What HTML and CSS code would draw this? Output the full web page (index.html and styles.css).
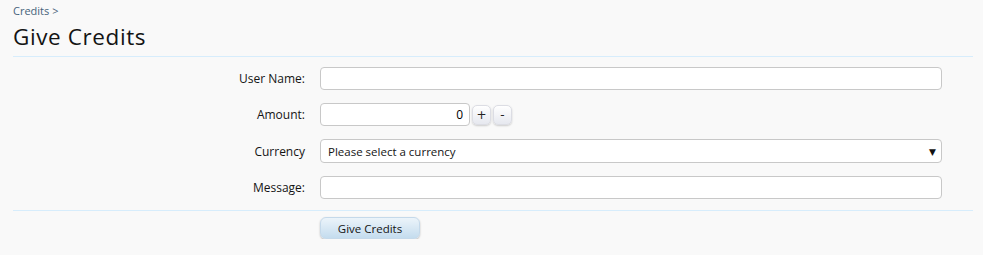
FILE: index.html
```html
<!DOCTYPE html>
<html>
<head>
<meta charset="utf-8">
<link rel="stylesheet" href="styles.css">
</head>
<body>
<div class="page">
  <div class="crumbs"><a href="#">Credits</a> &gt;</div>
  <h1 class="title">Give Credits</h1>
  <form class="form">
    <div class="row">
      <label class="label">User Name:</label>
      <div class="ctrl"><input class="text" type="text"></div>
    </div>
    <div class="row">
      <label class="label">Amount:</label>
      <div class="ctrl spin">
        <input class="text num" type="text" value="0">
        <button type="button" class="spinbtn">+</button>
        <button type="button" class="spinbtn">-</button>
      </div>
    </div>
    <div class="row">
      <label class="label">Currency</label>
      <div class="ctrl">
        <div class="select"><span>Please select a currency</span><span class="arrow">&#9660;</span></div>
      </div>
    </div>
    <div class="row last">
      <label class="label">Message:</label>
      <div class="ctrl"><input class="text" type="text"></div>
    </div>
    <div class="submit">
      <div class="spacer"></div>
      <div class="ctrl"><button type="button" class="button">Give Credits</button></div>
    </div>
  </form>
</div>
</body>
</html>
```
FILE: styles.css
```css
html, body { margin: 0; padding: 0; background: #f9f9f9; }
body { font-family: "Open Sans", "DejaVu Sans", sans-serif; font-size: 12px; color: #141414; }
.page { padding: 3px 10px 0 13px; }
.crumbs { font-size: 11px; color: #47637b; line-height: 16px; }
.crumbs a { color: #47637b; text-decoration: none; }
.title { font-size: 22.5px; letter-spacing: 0.6px; font-weight: normal; margin: 3px 0 0; line-height: 29px; color: #141414; padding-bottom: 5px; border-bottom: 1px solid #d7edfc; }
.form { padding-top: 10px; }
.row { display: flex; align-items: center; margin-bottom: 13px; }
.row.last { margin-bottom: 12px; }
.label { width: 292px; text-align: right; padding-right: 15px; color: #141414; }
.ctrl { flex: 0 0 622px; display: flex; align-items: center; }
.text { box-sizing: border-box; width: 622px; height: 23px; border: 1px solid #c8c8c8; border-radius: 4px; background: #fff; font: inherit; padding: 0 6px; outline: none; }
.num { width: 150px; text-align: right; }
.spinbtn { box-sizing: border-box; width: 19px; height: 20px; margin-left: 2px; border: 1px solid #dcdde4; border-radius: 5px; background: linear-gradient(#ffffff, #e6e8ef); box-shadow: 0 1px 2px rgba(0,0,0,0.18); font: 12px "DejaVu Sans", sans-serif; padding: 0; color: #222; }
.select { box-sizing: border-box; width: 622px; height: 24px; border: 1px solid #c8c8c8; border-radius: 4px; background: #fff; display: flex; align-items: center; justify-content: space-between; padding: 0 5px 0 7px; font-size: 11.5px; }
.arrow { font-size: 9px; color: #111; }
.submit { display: flex; border-top: 1px solid #d7edfc; padding-top: 6px; margin-top: -1px; }
.spacer { width: 307px; }
.button { width: 100px; height: 22px; border: 1px solid #c5d9ea; border-radius: 6px; background: linear-gradient(#ecf4fa, #c4dcee); box-shadow: 0 1px 2px rgba(0,0,0,0.25); font: 11.5px "Open Sans", sans-serif; color: #141414; padding: 0; }
```
